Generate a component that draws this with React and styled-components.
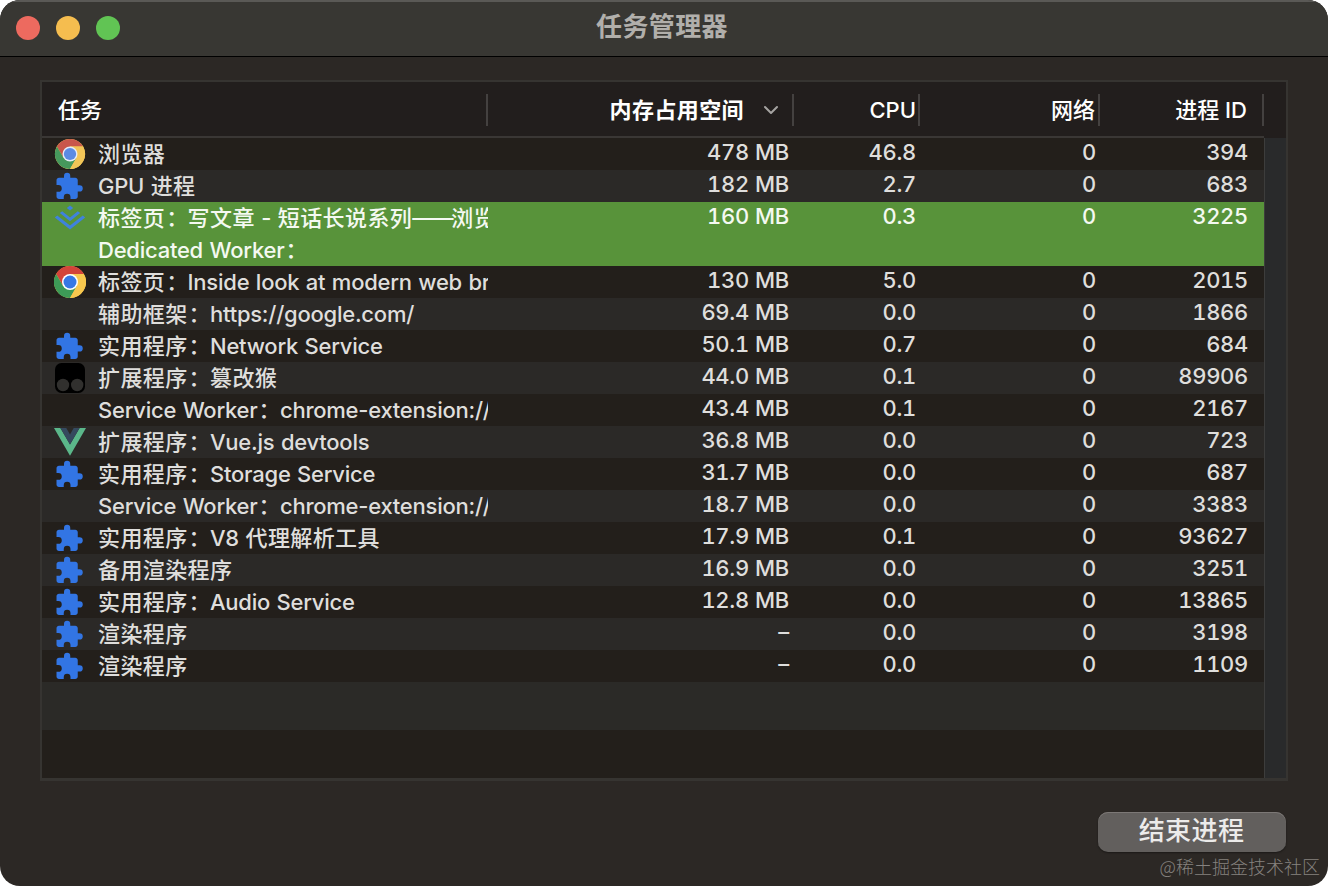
import React from "react";
import styled, { createGlobalStyle, css } from "styled-components";

const Global = createGlobalStyle`
  html, body { margin: 0; background: #fff; }
  * { box-sizing: border-box; }
`;

const sans = `Inter, "Noto Sans CJK SC", sans-serif`;

const Window = styled.main`
  width: 1328px;
  height: 886px;
  border-radius: 20px;
  overflow: hidden;
  background: #2c2825;
  color: #dfdedc;
  font-family: ${sans};
  font-size: 22px;
  display: flex;
  flex-direction: column;
`;

const TitleBar = styled.header`
  height: 57px;
  flex: none;
  display: grid;
  grid-template-columns: 1fr auto 1fr;
  align-items: center;
  padding: 0 18px 2px 16px;
  background: #383733;
  border-top: 2px solid #5a5956;
  border-bottom: 1px solid #000;
`;

const Lights = styled.div`
  display: flex;
  gap: 16px;
`;

const Light = styled.span`
  width: 24px;
  height: 24px;
  border-radius: 50%;
  background: ${(p) => p.$color};
`;

const Title = styled.h1`
  margin: 0 2px 2px 0;
  font-size: 26px;
  line-height: 36px;
  font-weight: 700;
  letter-spacing: 0.4px;
  color: #b1afab;
`;

const Content = styled.section`
  padding: 23px 40px 0;
  display: flex;
  flex-direction: column;
`;

const Table = styled.div`
  width: 1248px;
  height: 701px;
  border: 2px solid #363431;
  border-bottom-width: 3px;
  display: flex;
  flex-direction: column;
  background: #221e1d;
`;

const columns = css`
  display: grid;
  grid-template-columns: 446px 306px 126px 180px 164px;
`;

const HeadRow = styled.div`
  ${columns}
  width: 1222px;
  height: 56px;
  flex: none;
  align-items: center;
  padding-top: 2px;
  border-bottom: 2px solid #3a3735;
`;

const HeadCell = styled.div`
  height: 32px;
  line-height: 32px;
  display: flex;
  align-items: center;
  justify-content: ${(p) => (p.$left ? "flex-start" : "flex-end")};
  padding: 0 ${(p) => p.$right ?? 2}px 0 16px;
  border-right: 2px solid #444140;
  color: #fff;
  font-weight: ${(p) => (p.$sorted ? 700 : 500)};
  letter-spacing: ${(p) => (p.$sorted ? 0.4 : 0)}px;
  white-space: nowrap;
`;

const SortArrow = styled.svg`
  width: 14px;
  height: 10px;
  margin-left: 20px;
`;

const Main = styled.div`
  display: flex;
  flex: 1;
`;

const Rows = styled.div`
  width: 1222px;
`;

const Row = styled.div`
  ${columns}
  height: ${(p) => p.$height ?? 32}px;
  background: ${(p) => (p.$selected ? "#58933a" : p.$alt ? "#2b2927" : "#231f1b")};
  color: ${(p) => (p.$selected ? "#f4f9f1" : "#dfdedc")};
  font-weight: 500;
`;

const TaskCell = styled.div`
  display: grid;
  grid-template-columns: 32px 1fr;
  grid-auto-rows: 32px;
  column-gap: 12px;
  padding-left: 12px;
  overflow: hidden;
`;

const IconSlot = styled.span`
  width: 32px;
  height: 32px;
  display: flex;
  grid-row: 1;
`;

const TaskName = styled.span`
  grid-column: 2;
  line-height: 32px;
  letter-spacing: -0.24px;
  word-spacing: 0.9px;
  white-space: pre;
`;

const Han = styled.span`
  letter-spacing: 0.4px;
`;

const Colon = styled.span`
  letter-spacing: 0.4px;
  padding-left: 1px;
  margin-right: -1px;
`;

const Dash = styled.span`
  letter-spacing: -2.7px;
  margin-right: 0.5px;
`;

const NumberCell = styled.div`
  text-align: right;
  line-height: 28px;
  padding-right: ${(p) => p.$right ?? 4}px;
  letter-spacing: -0.3px;
  word-spacing: 0.6px;
  font-variant-numeric: tabular-nums;
  white-space: nowrap;
`;

const Filler = styled.div`
  height: 48px;
  background: ${(p) => (p.$alt ? "#2b2a27" : "#231f1b")};
`;

const ScrollTrack = styled.div`
  flex: 1;
  background: #292a2b;
  border-left: 1px solid #3d3d3c;
`;

const Footer = styled.footer`
  display: flex;
  flex-direction: column;
  align-items: flex-end;
  padding: 31px 2px 0 0;
`;

const EndButton = styled.button`
  width: 188px;
  height: 40px;
  padding: 0 1px 2px 0;
  border: 0;
  border-radius: 10px;
  background: #625f5d;
  box-shadow: inset 0 1px 0 #7c7876, 0 1px 2px rgba(0, 0, 0, 0.4);
  color: #ecebea;
  font-family: ${sans};
  font-size: 26px;
  line-height: 38px;
  font-weight: 500;
  letter-spacing: 0.4px;
`;

const Watermark = styled.span`
  margin: 1px -34px 0 0;
  font: 300 18px/26px "Noto Sans CJK SC", sans-serif;
  color: #85827f;
`;

const ChromeIcon = ({ small }) => {
  const [red, green, yellow, blue, ring] = small
    ? ["#c9574b", "#46985c", "#f2c557", "#5b8be3", "#e6ecf6"]
    : ["#d3443a", "#3d9a57", "#f8c84e", "#3678e4", "#fff"];
  return (
    <svg width="32" height="32" viewBox={small ? "-1 -1 34 34" : "0 0 32 32"}>
      <circle cx="16" cy="16" r="16" fill={yellow} />
      <path d="M16 8H29.86A16 16 0 0 0 2.14 8L9.07 20Z" fill={red} />
      <path d="M2.14 8A16 16 0 0 0 16 32L22.93 20 16 16 9.07 20Z" fill={green} />
      <path d="M16 32A16 16 0 0 0 29.86 8H16L22.93 20Z" fill={yellow} />
      <circle cx="16" cy="16" r="8" fill={ring} />
      <circle cx="16" cy="16" r="6.5" fill={blue} />
    </svg>
  );
};

const PuzzleIcon = () => (
  <svg width="32" height="32" viewBox="0 0 32 32">
    <path
      transform="translate(0 1.6) scale(1.25)"
      fill="#3275e4"
      d="M20.5 11H19V7c0-1.1-.9-2-2-2h-4V3.5a2.5 2.5 0 0 0-5 0V5H4c-1.1 0-1.99.9-1.99 2v3.8H3.5a2.7 2.7 0 0 1 0 5.4H2V20c0 1.1.9 2 2 2h3.8v-1.5a2.7 2.7 0 0 1 5.4 0V22H17c1.1 0 2-.9 2-2v-4h1.5a2.5 2.5 0 0 0 0-5z"
    />
  </svg>
);

const JuejinIcon = () => (
  <svg width="32" height="32" viewBox="0 0 32 32" fill="#3f82dc">
    <path d="M16 3.4 19.2 6 16 8.6 12.8 6Z" />
    <path d="M8.2 9.2 16 15.4 23.8 9.2 26.2 11.1 16 19.2 5.8 11.1Z" />
    <path d="M3.2 13.4 16 23.6 28.8 13.4 31.2 15.4 16 27.6 .8 15.4Z" />
  </svg>
);

const MonkeyIcon = () => (
  <svg width="32" height="32" viewBox="0 0 32 32">
    <rect x="1" y="1" width="30" height="30" rx="6.5" fill="#000" />
    <circle cx="9" cy="23" r="6.2" fill="#31302e" />
    <circle cx="23.2" cy="23" r="6.2" fill="#31302e" />
  </svg>
);

const VueIcon = () => (
  <svg width="32" height="32" viewBox="0 0 32 32">
    <path d="M0 2H6.4L16 18.6 25.6 2H32L16 29.7Z" fill="#5bb78a" />
    <path d="M6.4 2H12.3L16 8.4 19.7 2H25.6L16 18.6Z" fill="#35495e" />
  </svg>
);

const icons = {
  chromeSmall: <ChromeIcon small />,
  chrome: <ChromeIcon />,
  puzzle: <PuzzleIcon />,
  juejin: <JuejinIcon />,
  monkey: <MonkeyIcon />,
  vue: <VueIcon />,
};

const tasks = [
  ["chromeSmall", ["浏览器"], "478 MB", "46.8", "394"],
  ["puzzle", ["GPU 进程"], "182 MB", "2.7", "683"],
  ["juejin", ["标签页：写文章 - 短话长说系列——浏览", "Dedicated Worker："], "160 MB", "0.3", "3225"],
  ["chrome", ["标签页：Inside look at modern web br"], "130 MB", "5.0", "2015"],
  [null, ["辅助框架：https://google.com/"], "69.4 MB", "0.0", "1866"],
  ["puzzle", ["实用程序：Network Service"], "50.1 MB", "0.7", "684"],
  ["monkey", ["扩展程序：篡改猴"], "44.0 MB", "0.1", "89906"],
  [null, ["Service Worker：chrome-extension://"], "43.4 MB", "0.1", "2167"],
  ["vue", ["扩展程序：Vue.js devtools"], "36.8 MB", "0.0", "723"],
  ["puzzle", ["实用程序：Storage Service"], "31.7 MB", "0.0", "687"],
  [null, ["Service Worker：chrome-extension://"], "18.7 MB", "0.0", "3383"],
  ["puzzle", ["实用程序：V8 代理解析工具"], "17.9 MB", "0.1", "93627"],
  ["puzzle", ["备用渲染程序"], "16.9 MB", "0.0", "3251"],
  ["puzzle", ["实用程序：Audio Service"], "12.8 MB", "0.0", "13865"],
  ["puzzle", ["渲染程序"], "–", "0.0", "3198"],
  ["puzzle", ["渲染程序"], "–", "0.0", "1109"],
];

// Stripes follow text lines, so a two-line task shifts the rows after it.
const rows = tasks.map((task, i) => ({
  task,
  line: tasks.slice(0, i).reduce((n, t) => n + t[1].length, 0),
}));

// Han characters, full-width colons and dashes are tracked apart from Latin text.
const renderName = (name) =>
  name.split(/([\u4e00-\u9fff]+|：|—+)/).map((part, i) => {
    if (/^[\u4e00-\u9fff]/.test(part)) return <Han key={i}>{part}</Han>;
    if (part === "：") return <Colon key={i}>{part}</Colon>;
    if (part.startsWith("—")) return <Dash key={i}>{part}</Dash>;
    return part;
  });

export default function App() {
  return (
    <Window lang="zh-CN">
      <Global />
      <TitleBar>
        <Lights>
          <Light $color="#ed6a5f" />
          <Light $color="#f5bd4f" />
          <Light $color="#61c454" />
        </Lights>
        <Title>任务管理器</Title>
      </TitleBar>
      <Content>
        <Table>
          <HeadRow>
            <HeadCell $left>任务</HeadCell>
            <HeadCell $sorted $right={14}>
              内存占用空间
              <SortArrow viewBox="0 0 14 10" fill="none" stroke="#a5a3a1" strokeWidth="2" strokeLinecap="round" strokeLinejoin="round">
                <path d="M1 2 7 8 13 2" />
              </SortArrow>
            </HeadCell>
            <HeadCell>CPU</HeadCell>
            <HeadCell $right={3}>网络</HeadCell>
            <HeadCell $right={15}>进程 ID</HeadCell>
          </HeadRow>
          <Main>
            <Rows>
              {rows.map(({ task: [icon, names, memory, cpu, pid], line }) => (
                <Row key={pid} $alt={line % 2 === 1} $selected={names.length > 1} $height={names.length * 32}>
                  <TaskCell>
                    <IconSlot>{icons[icon]}</IconSlot>
                    {names.map((name) => (
                      <TaskName key={name}>{renderName(name)}</TaskName>
                    ))}
                  </TaskCell>
                  <NumberCell $right={5}>{memory}</NumberCell>
                  <NumberCell>{cpu}</NumberCell>
                  <NumberCell>0</NumberCell>
                  <NumberCell $right={16}>{pid}</NumberCell>
                </Row>
              ))}
              <Filler $alt />
              <Filler />
            </Rows>
            <ScrollTrack />
          </Main>
        </Table>
        <Footer>
          <EndButton>结束进程</EndButton>
          <Watermark>@稀土掘金技术社区</Watermark>
        </Footer>
      </Content>
    </Window>
  );
}
